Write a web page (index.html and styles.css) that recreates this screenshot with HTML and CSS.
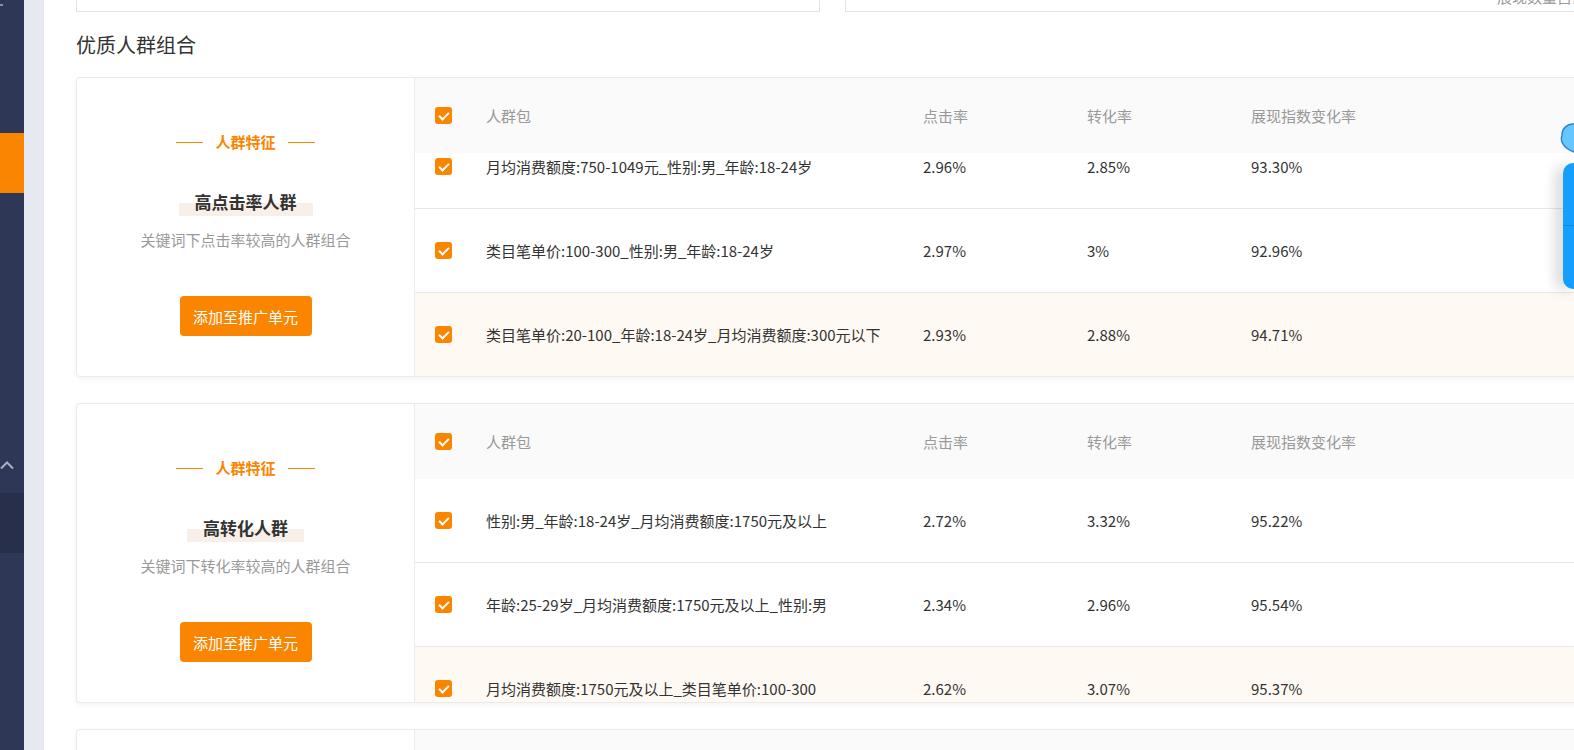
FILE: index.html
```html
<!DOCTYPE html>
<html lang="zh-CN">
<head>
    <meta charset="UTF-8">
    <meta name="viewport" content="width=device-width, initial-scale=1.0">
    <title>优质人群组合</title>
    <link rel="stylesheet" href="styles.css">
</head>
<body>
    <div class="layout">
        <aside class="sidebar">
            <div class="side-mark"></div>
            <div class="side-active"></div>
            <div class="side-toggle">
                <svg width="14" height="10" viewBox="0 0 14 10"><path d="M1 8.5 L7 2.5 L13 8.5" stroke="#aab0c3" stroke-width="2" fill="none"/></svg>
            </div>
            <div class="side-sub"></div>
        </aside>
        <div class="strip"></div>

        <main class="main">
            <div class="top-row">
                <div class="top-box top-box-left"></div>
                <div class="top-box top-box-right"><span>展现数量占比</span></div>
            </div>

            <h2 class="section-title">优质人群组合</h2>

            <section class="group-card">
                <div class="group-info">
                    <div class="info-label">人群特征</div>
                    <div class="info-title">高点击率人群</div>
                    <p class="info-desc">关键词下点击率较高的人群组合</p>
                    <button class="btn-add">添加至推广单元</button>
                </div>
                <div class="group-table" id="table-click">
                    <div class="t-row t-head">
                        <span class="checkbox"></span>
                        <span>人群包</span>
                        <span>点击率</span>
                        <span>转化率</span>
                        <span>展现指数变化率</span>
                    </div>
                    <div class="t-row">
                        <span class="checkbox"></span>
                        <span>月均消费额度:750-1049元_性别:男_年龄:18-24岁</span>
                        <span>2.96%</span>
                        <span>2.85%</span>
                        <span>93.30%</span>
                    </div>
                    <div class="t-row">
                        <span class="checkbox"></span>
                        <span>类目笔单价:100-300_性别:男_年龄:18-24岁</span>
                        <span>2.97%</span>
                        <span>3%</span>
                        <span>92.96%</span>
                    </div>
                    <div class="t-row is-hot">
                        <span class="checkbox"></span>
                        <span>类目笔单价:20-100_年龄:18-24岁_月均消费额度:300元以下</span>
                        <span>2.93%</span>
                        <span>2.88%</span>
                        <span>94.71%</span>
                    </div>
                </div>
            </section>

            <section class="group-card">
                <div class="group-info">
                    <div class="info-label">人群特征</div>
                    <div class="info-title">高转化人群</div>
                    <p class="info-desc">关键词下转化率较高的人群组合</p>
                    <button class="btn-add">添加至推广单元</button>
                </div>
                <div class="group-table">
                    <div class="t-row t-head">
                        <span class="checkbox"></span>
                        <span>人群包</span>
                        <span>点击率</span>
                        <span>转化率</span>
                        <span>展现指数变化率</span>
                    </div>
                    <div class="t-row">
                        <span class="checkbox"></span>
                        <span>性别:男_年龄:18-24岁_月均消费额度:1750元及以上</span>
                        <span>2.72%</span>
                        <span>3.32%</span>
                        <span>95.22%</span>
                    </div>
                    <div class="t-row">
                        <span class="checkbox"></span>
                        <span>年龄:25-29岁_月均消费额度:1750元及以上_性别:男</span>
                        <span>2.34%</span>
                        <span>2.96%</span>
                        <span>95.54%</span>
                    </div>
                    <div class="t-row is-hot">
                        <span class="checkbox"></span>
                        <span>月均消费额度:1750元及以上_类目笔单价:100-300</span>
                        <span>2.62%</span>
                        <span>3.07%</span>
                        <span>95.37%</span>
                    </div>
                </div>
            </section>

            <section class="group-card">
                <div class="group-info">
                    <div class="info-label">人群特征</div>
                    <div class="info-title">高展现人群</div>
                    <p class="info-desc">关键词下展现指数较高的人群组合</p>
                    <button class="btn-add">添加至推广单元</button>
                </div>
                <div class="group-table">
                    <div class="t-row t-head">
                        <span class="checkbox"></span>
                        <span>人群包</span>
                        <span>点击率</span>
                        <span>转化率</span>
                        <span>展现指数变化率</span>
                    </div>
                </div>
            </section>
        </main>
    </div>

    <div class="helper-head">
        <svg width="16" height="32" viewBox="0 0 16 32"><path d="M16 2 C9 1.5 3.5 7 4 13.5 C2 18 4.5 26 16 30" fill="#66c6ff" stroke="#3482c4" stroke-width="1.4"/></svg>
    </div>
    <div class="helper">
        <div class="helper-item"></div>
        <div class="helper-item"></div>
    </div>

    <script>
        // first table is scrolled down to show its last row
        document.getElementById('table-click').scrollTop = 28;
    </script>
</body>
</html>
```

FILE: styles.css
```css
body {
    margin: 0;
    font-family: "Microsoft YaHei", "Noto Sans CJK SC", "Noto Sans", sans-serif;
    color: #333;
    background: #fff;
    overflow: hidden;
}

.layout {
    display: flex;
    height: 100vh;
}

/* sidebar */
.sidebar {
    width: 24px;
    flex-shrink: 0;
    background: #2e3856;
    display: flex;
    flex-direction: column;
}

.side-mark {
    width: 3px;
    height: 2px;
    margin-top: 4px;
    background: #8a90a3;
}

.side-active {
    margin-top: 127px;
    height: 60px;
    background: #fa8500;
}

.side-toggle {
    margin-top: 267px;
    height: 12px;
    display: flex;
}

.side-sub {
    margin-top: 21px;
    height: 60px;
    background: #282f4a;
}

.strip {
    width: 20px;
    flex-shrink: 0;
    background: #e6e9f2;
}

.main {
    flex: 1;
    overflow: hidden;
    padding-left: 32px;
}

/* boxes left over from the section above */
.top-row {
    display: flex;
    gap: 25px;
    height: 12px;
}

.top-box {
    height: 12px;
    box-sizing: border-box;
    border: 1px solid #e3e3e3;
    border-top: none;
    flex-shrink: 0;
}

.top-box-left {
    width: 744px;
}

.top-box-right {
    width: 793px;
    display: flex;
    justify-content: flex-end;
    align-items: flex-end;
    overflow: hidden;
    padding: 0 50px 4px 0;
    color: #999;
    font-size: 15px;
    line-height: 20px;
}

.section-title {
    margin: 19px 0 18px;
    font-size: 20px;
    font-weight: normal;
    line-height: 28px;
    color: #333;
}

/* group card */
.group-card {
    display: flex;
    width: 1560px;
    height: 300px;
    box-sizing: border-box;
    border: 1px solid #ebebeb;
    border-radius: 4px;
    box-shadow: 0 2px 6px rgba(0, 0, 0, 0.05);
    margin-bottom: 26px;
    overflow: hidden;
    background: #fff;
}

.group-info {
    width: 337px;
    flex-shrink: 0;
    border-right: 1px solid #ebebeb;
    display: flex;
    flex-direction: column;
    align-items: center;
    padding-top: 54px;
}

.info-label {
    display: flex;
    align-items: center;
    gap: 12px;
    color: #fa8500;
    font-size: 15px;
    font-weight: bold;
    line-height: 20px;
}

.info-label::before,
.info-label::after {
    content: '';
    width: 27px;
    height: 1px;
    background: #fa8500;
}

.info-title {
    margin-top: 36px;
    padding: 0 16px;
    font-size: 17px;
    font-weight: bold;
    line-height: 28px;
    color: #333;
    background: linear-gradient(transparent 54%, #f8f0e8 54%);
}

.info-desc {
    margin: 13px 0 0;
    font-size: 15px;
    line-height: 22px;
    color: #999;
}

.btn-add {
    margin-top: 45px;
    width: 132px;
    height: 40px;
    border: none;
    border-radius: 4px;
    background: #fa8500;
    color: #fff;
    font-family: inherit;
    font-size: 15px;
    cursor: pointer;
}

.btn-add:hover {
    background: #f07a00;
}

/* table */
.group-table {
    flex: 1;
    overflow-y: auto;
    scrollbar-width: none;
}

.group-table::-webkit-scrollbar {
    display: none;
}

.t-row {
    display: grid;
    grid-template-columns: 71px 437px 164px 164px 1fr;
    align-items: center;
    height: 84px;
    box-sizing: border-box;
    border-bottom: 1px solid #e8e8e8;
    font-size: 15px;
    color: #333;
    background: #fff;
}

.t-head {
    height: 75px;
    border-bottom: none;
    background: #fafafa;
    color: #999;
    position: sticky;
    top: 0;
    z-index: 1;
}

.t-row.is-hot {
    background: #fef9f2;
}

.checkbox {
    margin-left: 20px;
    width: 17px;
    height: 17px;
    border-radius: 3px;
    background: #fa8500;
    display: flex;
    align-items: center;
    justify-content: center;
}

.checkbox::after {
    content: '';
    width: 4px;
    height: 8px;
    margin-top: -2px;
    border: solid #fff;
    border-width: 0 2px 2px 0;
    transform: rotate(45deg);
}

/* floating helper on the right edge */
.helper-head {
    position: fixed;
    right: 0;
    top: 122px;
    width: 16px;
    height: 32px;
    z-index: 10;
}

.helper-head svg {
    display: block;
}

.helper {
    position: fixed;
    right: 0;
    top: 163px;
    width: 11px;
    height: 126px;
    background: #149ffe;
    border-radius: 10px 0 0 10px;
    box-shadow: -6px 2px 14px rgba(0, 0, 0, 0.2);
    display: flex;
    flex-direction: column;
    z-index: 10;
}

.helper-item {
    height: 63px;
    border-bottom: 1px solid #1189d9;
    box-sizing: border-box;
}

.helper-item:last-child {
    border-bottom: none;
}
```
